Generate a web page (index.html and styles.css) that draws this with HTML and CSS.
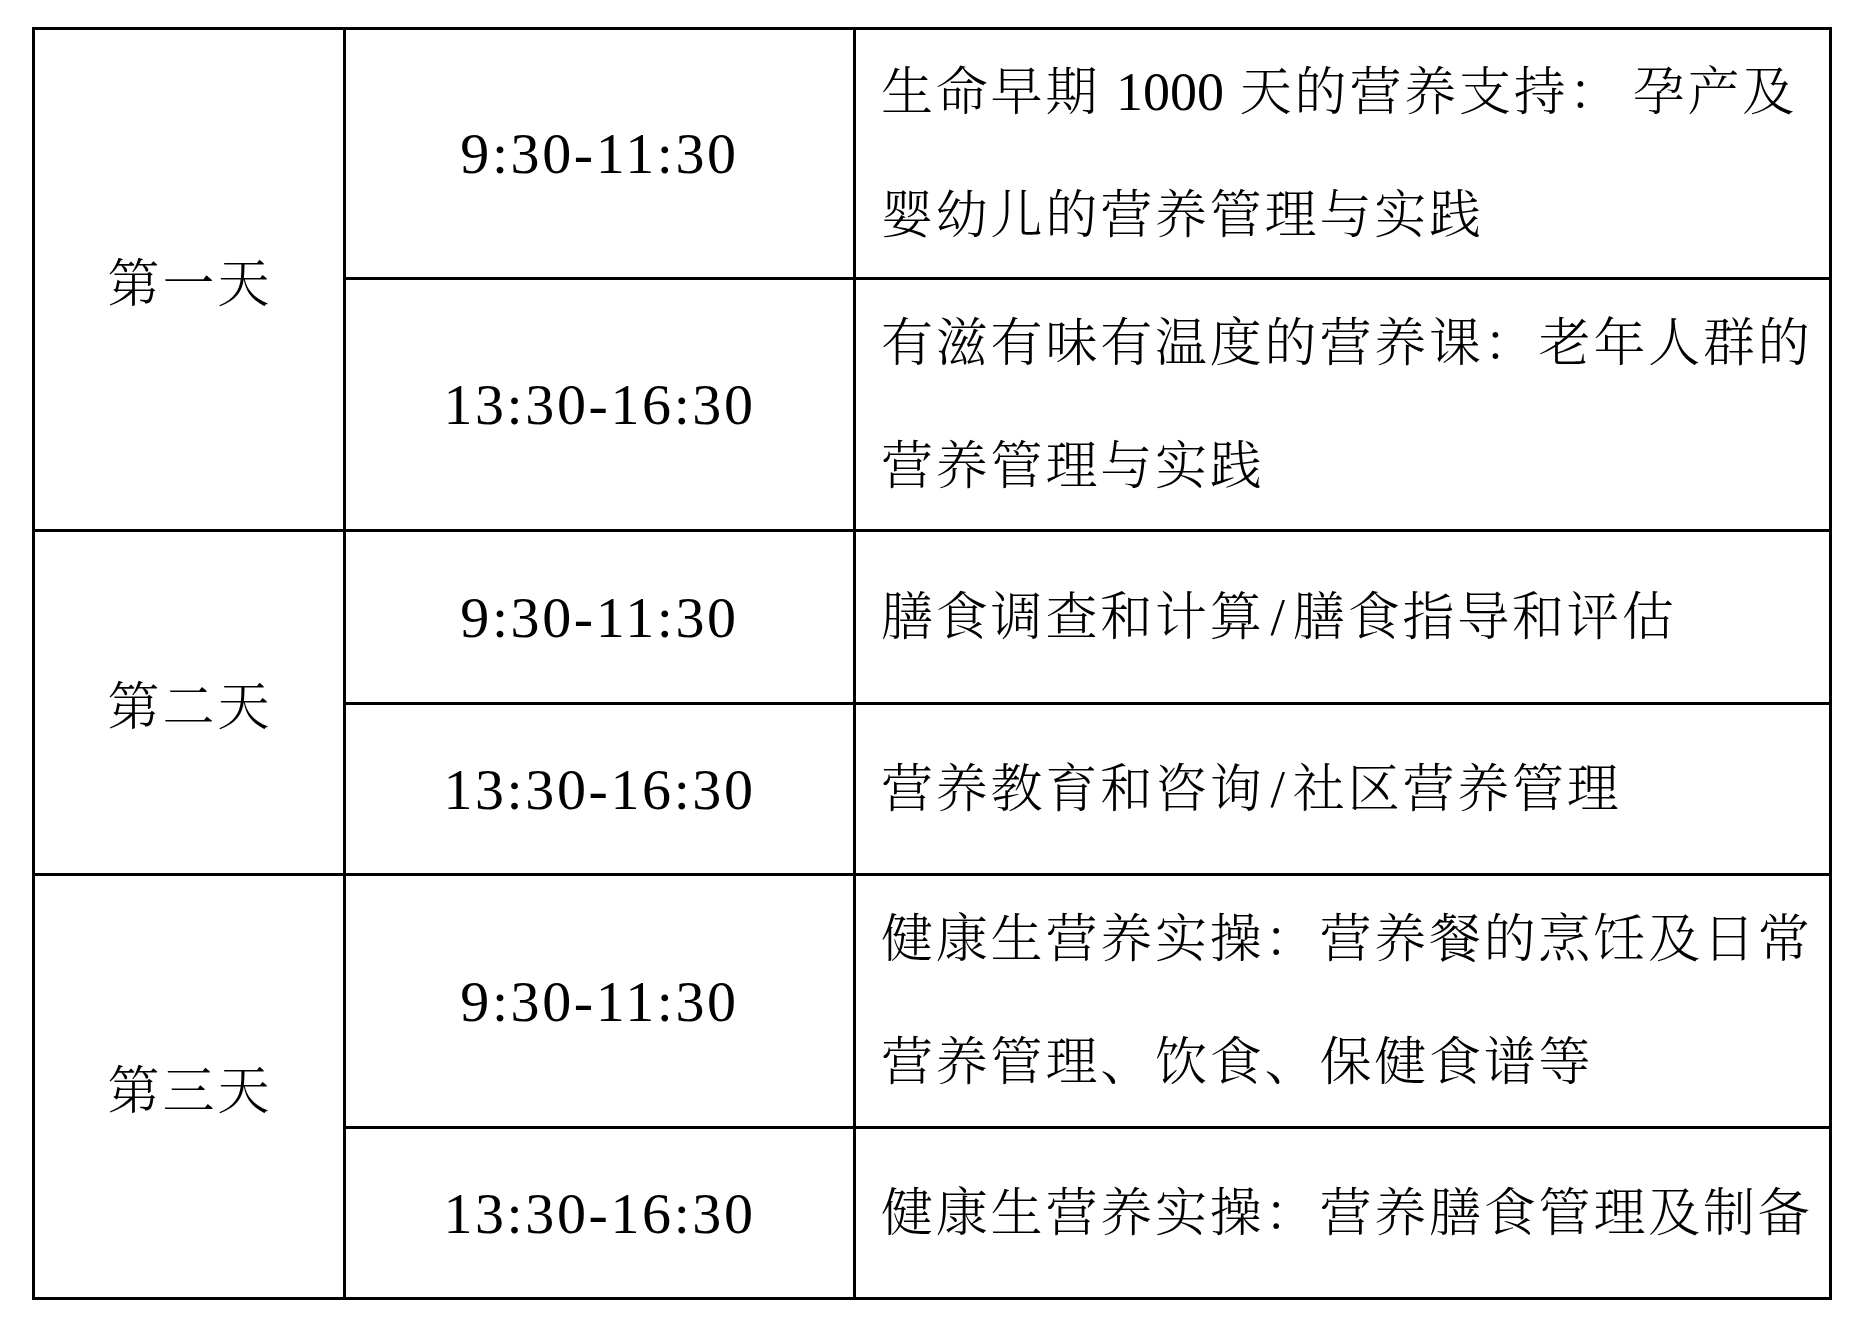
FILE: index.html
```html
<!DOCTYPE html>
<html lang="zh-CN">
<head>
<meta charset="utf-8">
<title>课程安排</title>
<link rel="stylesheet" href="styles.css">
</head>
<body>
<div class="page">
  <table class="schedule">
    <colgroup>
      <col class="col-day">
      <col class="col-time">
      <col class="col-topic">
    </colgroup>
    <tbody>
      <tr class="row-r1">
        <td class="day" rowspan="2">第一天</td>
        <td class="time">9:30-11:30</td>
        <td class="topic">生命早期 <span class="num">1000</span> 天的营养支持<span class="wide">：</span>孕产及<br>婴幼儿的营养管理与实践</td>
      </tr>
      <tr class="row-r2">
        <td class="time">13:30-16:30</td>
        <td class="topic">有滋有味有温度的营养课：老年人群的<br>营养管理与实践</td>
      </tr>
      <tr class="row-r3">
        <td class="day" rowspan="2">第二天</td>
        <td class="time">9:30-11:30</td>
        <td class="topic">膳食调查和计算<span class="slash">/</span>膳食指导和评估</td>
      </tr>
      <tr class="row-r4">
        <td class="time">13:30-16:30</td>
        <td class="topic">营养教育和咨询<span class="slash">/</span>社区营养管理</td>
      </tr>
      <tr class="row-r5">
        <td class="day" rowspan="2">第三天</td>
        <td class="time">9:30-11:30</td>
        <td class="topic">健康生营养实操：营养餐的烹饪及日常<br>营养管理、饮食、保健食谱等</td>
      </tr>
      <tr class="row-r6">
        <td class="time">13:30-16:30</td>
        <td class="topic">健康生营养实操：营养膳食管理及制备</td>
      </tr>
    </tbody>
  </table>
</div>
</body>
</html>
```
FILE: styles.css
```css
html, body {
  margin: 0;
  padding: 0;
  background: #ffffff;
}

.page {
  padding: 27px 0 0 32px;
}

.schedule {
  border-collapse: separate;
  border-spacing: 0;
  table-layout: fixed;
  width: 1797px;
  border-top: 3px solid #000;
  border-left: 3px solid #000;
  color: #000;
  font-family: "Liberation Serif", "Noto Serif CJK SC", "Source Han Serif SC", "AR PL UMing CN", "Noto Sans CJK SC", serif;
  font-size: 52px;
  font-weight: 300;
}

.col-day { width: 311px; }
.col-time { width: 510px; }
.col-topic { width: 976px; }

.schedule td {
  box-sizing: border-box;
  border-right: 3px solid #000;
  border-bottom: 3px solid #000;
  padding: 0;
  vertical-align: middle;
  white-space: nowrap;
  letter-spacing: 2.8px;
}

.row-r1 { height: 250px; }
.row-r2 { height: 252px; }
.row-r3 { height: 173px; }
.row-r4 { height: 171px; }
.row-r5 { height: 253px; }
.row-r6 { height: 171px; }

.schedule .day {
  text-align: center;
  padding-left: 2px;
  letter-spacing: 3px;
}

.schedule .time {
  text-align: center;
  font-family: "Liberation Serif", "Times New Roman", serif;
  font-size: 58px;
  font-weight: 400;
  letter-spacing: 2.6px;
}

.schedule .topic {
  text-align: left;
  padding-left: 25px;
  line-height: 123px;
}

.num {
  letter-spacing: 0;
  font-size: 54px;
  font-weight: 400;
}

.wide {
  letter-spacing: 12px;
}

.slash {
  font-weight: 400;
  padding: 0 5px 0 6px;
}
```
